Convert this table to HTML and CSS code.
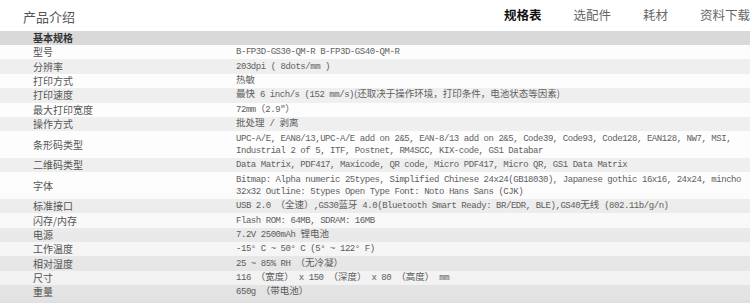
FILE: index.html
```html
<!DOCTYPE html>
<html lang="zh">
<head>
<meta charset="utf-8">
<link rel="stylesheet" href="styles.css">
</head>
<body>
<header class="top">
  <h1 class="title">产品介绍</h1>
  <nav class="tabs">
    <span class="tab active">规格表</span>
    <span class="tab">选配件</span>
    <span class="tab">耗材</span>
    <span class="tab">资料下载</span>
  </nav>
</header>
<section class="specs">
  <div class="group">基本规格</div>
  <div class="row"><div class="k">型号</div><div class="v">B-FP3D-GS30-QM-R B-FP3D-GS40-QM-R</div></div>
  <div class="row alt"><div class="k">分辨率</div><div class="v">203dpi ( 8dots/mm )</div></div>
  <div class="row"><div class="k">打印方式</div><div class="v"><span class="zh">热敏</span></div></div>
  <div class="row alt"><div class="k">打印速度</div><div class="v"><span class="zh">最快</span> 6 inch/s (152 mm/s)<span class="zh">(还取决于操作环境，打印条件，电池状态等因素)</span></div></div>
  <div class="row"><div class="k">最大打印宽度</div><div class="v">72mm<span class="zh">（</span>2.9"<span class="zh">）</span></div></div>
  <div class="row alt"><div class="k">操作方式</div><div class="v"><span class="zh">批处理</span> / <span class="zh">剥离</span></div></div>
  <div class="row double"><div class="k">条形码类型</div><div class="v">UPC-A/E, EAN8/13,UPC-A/E add on 2&amp;5, EAN-8/13 add on 2&amp;5, Code39, Code93, Code128, EAN128, NW7, MSI,<br>Industrial 2 of 5, ITF, Postnet, RM4SCC, KIX-code, GS1 Databar</div></div>
  <div class="row alt"><div class="k">二维码类型</div><div class="v">Data Matrix, PDF417, Maxicode, QR code, Micro PDF417, Micro QR, GS1 Data Matrix</div></div>
  <div class="row double"><div class="k">字体</div><div class="v">Bitmap: Alpha numeric 25types, Simplified Chinese 24x24(GB18030), Japanese gothic 16x16, 24x24, mincho<br>32x32 Outline: 5types Open Type Font: Noto Hans Sans (CJK)</div></div>
  <div class="row alt"><div class="k">标准接口</div><div class="v">USB 2.0 <span class="zh">（全速）</span>,GS30<span class="zh">蓝牙</span> 4.0(Bluetooth Smart Ready: BR/EDR, BLE),GS40<span class="zh">无线</span> (802.11b/g/n)</div></div>
  <div class="row"><div class="k">闪存/内存</div><div class="v">Flash ROM: 64MB, SDRAM: 16MB</div></div>
  <div class="row alt"><div class="k">电源</div><div class="v">7.2V 2500mAh <span class="zh">锂电池</span></div></div>
  <div class="row"><div class="k">工作温度</div><div class="v">-15° C ~ 50° C (5° ~ 122° F)</div></div>
  <div class="row alt"><div class="k">相对湿度</div><div class="v">25 ~ 85% RH <span class="zh">（无冷凝）</span></div></div>
  <div class="row"><div class="k">尺寸</div><div class="v">116 <span class="zh">（宽度）</span> x 150 <span class="zh">（深度）</span> x 80 <span class="zh">（高度）</span> mm</div></div>
  <div class="row alt"><div class="k">重量</div><div class="v">650g <span class="zh">（带电池）</span></div></div>
  <div class="row tail"></div>
</section>
</body>
</html>
```
FILE: styles.css
```css
html, body {
  margin: 0;
  padding: 0;
  background: #ffffff;
}
body {
  font-family: "Noto Sans CJK SC", "Liberation Sans", sans-serif;
  width: 750px;
  height: 303px;
  overflow: hidden;
}
.top {
  height: 31px;
  display: flex;
  align-items: center;
  justify-content: space-between;
}
.title {
  margin: 0 0 0 23px;
  font-size: 13px;
  font-weight: normal;
  color: #555555;
  line-height: 1;
  position: relative;
  top: 1px;
}
.tabs {
  display: flex;
  gap: 32px;
}
.tab {
  font-size: 12.5px;
  line-height: 1;
  color: #666666;
}
.tab.active {
  color: #111111;
  font-weight: bold;
}
.specs {
  position: relative;
}
.specs::after {
  content: "";
  position: absolute;
  left: 0;
  right: 0;
  top: 150px;
  bottom: 0;
  background: linear-gradient(to bottom, rgba(0,0,0,0) 0%, rgba(0,0,0,0.055) 100%);
  pointer-events: none;
}
.group {
  height: 14px;
  line-height: 14px;
  background: #d9d9d9;
  padding-left: 33px;
  font-size: 10px;
  font-weight: bold;
  color: #333333;
}
.row {
  display: grid;
  grid-template-columns: 236px 1fr;
  align-items: center;
  height: 14.4px;
  background: #fdfdfd;
}
.row.double {
  height: 26.6px;
}
.row.alt {
  background: #efefef;
}
.row.tail {
  height: 6px;
  background: #ececec;
}
.k {
  padding-left: 33px;
  font-size: 10px;
  line-height: 12px;
  color: #555555;
}
.v {
  font-family: "Liberation Mono", "Noto Sans CJK SC", monospace;
  font-size: 9px;
  letter-spacing: -0.45px;
  line-height: 12px;
  color: #606060;
  white-space: nowrap;
}
.zh {
  font-family: "Noto Sans CJK SC", sans-serif;
  font-size: 9.5px;
  line-height: 1;
  letter-spacing: 0;
}
```
